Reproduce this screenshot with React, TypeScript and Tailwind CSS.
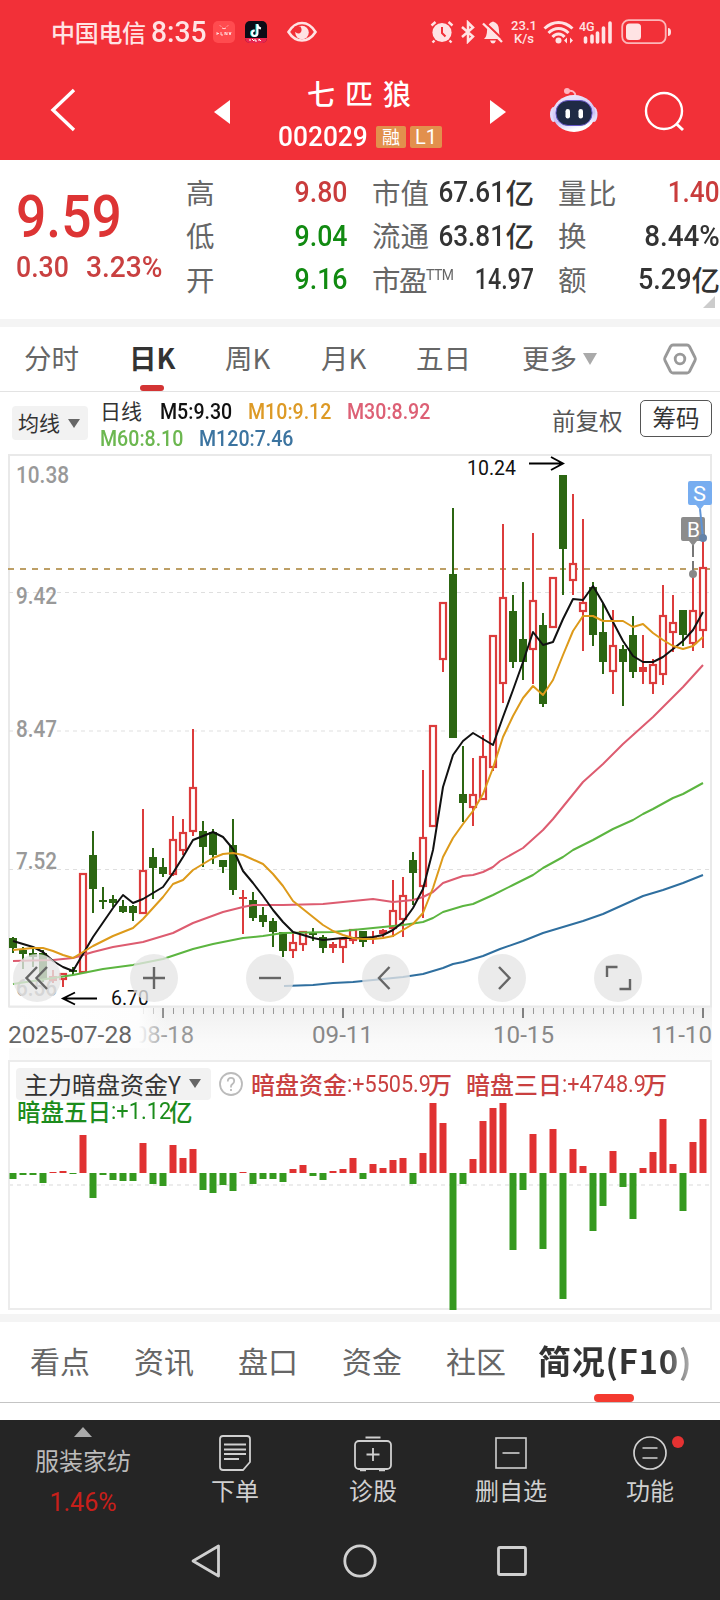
import type { ReactNode } from "react";

type Candle = {
  up: boolean;
  top: number;
  bottom: number;
  high: number;
  low: number;
};

const UP = "#dc3c3c";
const DOWN = "#2c6612";

// [direction, body top, body bottom, high, low] in chart pixels
const rawCandles: [0 | 1, number, number, number, number][] = [
  [0, 938, 948, 937, 953], [0, 950, 954, 947, 969], [0, 953, 957, 947, 967], [0, 953, 980, 950, 982],
  [1, 976, 981, 970, 983], [1, 973, 980, 973, 987], [0, 970, 972, 967, 975], [1, 873, 973, 873, 973],
  [0, 855, 889, 831, 913], [0, 900, 902, 887, 909], [0, 899, 903, 895, 907], [0, 906, 912, 900, 913],
  [0, 906, 913, 905, 921], [1, 870, 914, 809, 914], [0, 857, 868, 848, 899], [0, 867, 874, 858, 877],
  [1, 839, 875, 816, 876], [1, 832, 851, 819, 855], [1, 787, 832, 729, 836], [0, 831, 847, 821, 867],
  [0, 832, 855, 829, 864], [0, 860, 867, 860, 873], [0, 845, 890, 819, 895], [1, 897, 899, 890, 934],
  [0, 900, 918, 892, 921], [0, 915, 922, 907, 927], [0, 921, 932, 918, 947], [0, 932, 951, 932, 957],
  [1, 942, 951, 933, 958], [1, 931, 945, 931, 951], [0, 933, 935, 928, 941], [0, 937, 948, 935, 953],
  [1, 944, 948, 942, 953], [1, 938, 948, 938, 963], [1, 929, 941, 929, 944], [0, 931, 942, 931, 947],
  [1, 937, 939, 931, 944], [1, 930, 934, 929, 937], [1, 910, 929, 880, 937], [1, 895, 920, 877, 937],
  [0, 860, 873, 852, 905], [1, 837, 887, 770, 918], [1, 725, 827, 725, 827], [1, 602, 660, 602, 672],
  [0, 574, 738, 508, 738], [0, 794, 803, 746, 822], [1, 794, 808, 758, 826], [1, 756, 800, 735, 800],
  [1, 635, 768, 635, 771], [1, 597, 684, 524, 703], [0, 611, 662, 595, 668], [0, 639, 662, 582, 680],
  [1, 600, 650, 533, 684], [0, 625, 704, 613, 707], [1, 577, 628, 577, 628], [0, 475, 549, 475, 595],
  [1, 563, 581, 494, 595], [1, 602, 612, 519, 651], [0, 587, 635, 582, 646], [0, 632, 662, 603, 674],
  [1, 645, 672, 610, 694], [0, 649, 662, 645, 706], [0, 635, 672, 616, 678], [1, 667, 672, 635, 684],
  [1, 664, 684, 659, 694], [1, 615, 675, 585, 685], [1, 622, 633, 595, 652], [0, 610, 635, 610, 646],
  [1, 610, 644, 573, 651], [1, 567, 631, 537, 648],
];

const candles: Candle[] = rawCandles.map(([up, top, bottom, high, low]) => ({
  up: up === 1,
  top,
  bottom,
  high,
  low,
}));

const funds = [
  -6, -2, -2, -10, 1, 2, -1, 38, -25, -2, -7, -8, -8, 30, -11, -13, 28, 15, 24, -17, -20, -12, -18, 1,
  -11, -6, -6, -9, 4, 8, -3, -7, 2, 4, 15, -6, 9, 5, 13, 15, -11, 20, 70, 50, -137, -11, 14, 52, 65,
  70, -77, -17, 39, -76, 44, -126, 24, 7, -58, -33, 22, -14, -46, 5, 21, 54, 9, -38, 31, 54,
];

const averages = [
  {
    color: "#5cb540",
    points:
      "13,984 73,975 103,969 133,965 163,959 193,949 213,944 243,938 263,936 283,933 333,932 363,929 403,925 423,922 433,918 443,912 463,906 473,904 493,895 513,885 533,875 543,868 563,857 573,850 593,840 613,829 633,820 643,814 653,809 673,798 683,794 703,783",
  },
  {
    color: "#2f6f9f",
    points:
      "284,986 313,985 333,983 353,982 403,977 423,974 443,968 453,964 463,962 483,956 500,949 523,941 543,933 563,927 583,921 603,914 623,905 643,896 663,890 683,883 703,875",
  },
  {
    color: "#dd5c70",
    points:
      "13,961 53,960 73,958 93,952 113,947 143,942 173,933 193,923 223,912 243,907 253,905 283,905 323,904 343,902 373,899 393,902 413,900 423,897 433,892 443,883 463,876 473,875 483,872 493,867 500,861 523,848 543,830 553,819 583,782 603,764 623,744 643,726 653,717 663,707 683,687 703,665",
  },
  {
    color: "#111111",
    points:
      "13,941 33,947 43,952 53,961 63,967 73,971 93,937 113,908 123,895 133,903 143,899 163,887 173,873 183,857 193,840 203,836 213,832 223,837 233,849 243,871 253,883 263,896 273,910 283,922 293,932 303,935 313,938 323,940 333,939 343,938 363,938 373,937 383,935 393,930 403,922 413,908 423,889 433,850 443,787 453,755 463,741 473,733 483,739 493,745 503,717 513,690 523,662 533,632 543,645 553,642 563,619 573,599 583,600 593,586 603,603 613,622 623,641 633,656 643,662 653,662 663,657 673,649 683,641 693,630 703,612",
  },
  {
    color: "#dd9a1a",
    points:
      "13,950 33,948 43,948 53,951 63,955 73,958 93,946 113,936 133,928 143,919 153,908 163,897 173,884 183,880 193,870 213,858 223,854 233,853 243,855 263,864 273,874 283,886 293,901 303,909 313,917 323,925 333,931 343,935 353,938 363,939 373,939 383,938 393,936 403,930 413,924 423,913 433,888 443,857 453,838 463,824 473,811 483,794 493,768 503,737 513,716 523,698 533,686 543,695 553,680 563,655 573,631 583,616 593,616 603,621 623,621 633,627 643,624 653,633 663,640 673,646 683,649 693,646 703,637",
  },
];

const xOf = (index: number) => 13 + index * 10;

function Num({ children, className = "" }: { children: ReactNode; className?: string }) {
  return <span className={`inline-block whitespace-nowrap font-[Roboto] ${className}`}>{children}</span>;
}

function ChartText({
  x,
  y,
  width,
  size,
  fill,
  children,
  weight = 400,
}: {
  x: number;
  y: number;
  width: number;
  size: number;
  fill: string;
  children: string;
  weight?: number;
}) {
  return (
    <text x={x} y={y} fontSize={size} fill={fill} fontWeight={weight} textLength={width} lengthAdjust="spacingAndGlyphs" fontFamily="Roboto, sans-serif">
      {children}
    </text>
  );
}

function StatusBar() {
  return (
    <div className="flex h-16 items-center pl-[51px] text-[#ffe3e4]">
      <span className="mb-px w-[100px] text-[24px] leading-none font-medium tracking-[-0.3px]">中国电信</span>
      <Num className="w-[62px] origin-left scale-x-[0.94] text-[30px] leading-none font-medium">8:35</Num>
      <svg width="22" height="22" viewBox="0 0 22 22">
        <rect width="22" height="22" rx="5" fill="#ff4b4f" />
        <path d="M7 4.500l1 1M15 4.500l-1 1M9 7q2 1.500 4 0" stroke="#ffd7d7" fill="none" />
        <path d="M4 11v3M4 12.500h2M8 11v3h2M12 14v-3l2 3v-3M16 11l1 3 1-3" stroke="#ffd7d7" fill="none" />
      </svg>
      <svg width="22" height="22" viewBox="0 0 22 22" className="ml-[10px]">
        <rect width="22" height="22" rx="5" fill="#0c0b16" />
        <path d="M0 17h22v0.500a5 5 0 0 1-5 4.500H5a5 5 0 0 1-5-4.500z" fill="#e9264f" />
        <path d="M11.500 3v9.200a2.700 2.700 0 1 1-2.700-2.700" stroke="#27e6e5" strokeWidth="2" fill="none" />
        <path d="M12.500 3v9.200a2.700 2.700 0 1 1-2.700-2.700M12.500 4q.5 3 3.500 3.500" stroke="#fff" strokeWidth="2" fill="none" />
        <path d="M5 20v-2M7 18l2 2M10 18v2h2M14 20v-2l2 2" stroke="#fff" fill="none" />
      </svg>
      <svg width="30" height="22" viewBox="0 0 30 22" className="ml-5">
        <path d="M1.500 11Q7 2 15 2t13.500 9Q23 19.500 15 19.500T1.500 11z" fill="none" stroke="currentColor" strokeWidth="2.600" />
        <circle cx="15" cy="11.500" r="6.800" fill="currentColor" />
        <path d="M7.500 5.500h6q2 3.500.3 5.700t-5 .3q-2-1.500-1.300-6z" fill="#f23038" />
      </svg>
      <svg width="24" height="24" viewBox="0 0 24 24" className="ml-[113px]">
        <circle cx="12" cy="12.500" r="9.600" fill="currentColor" />
        <path d="M1.500 5.500L5.500 2M22.500 5.500L18.500 2M4.500 20.500L2.500 22.500M19.500 20.500l2 2" stroke="currentColor" strokeWidth="2.400" />
        <path d="M12 7v6l3.500 3.500" stroke="#f23038" strokeWidth="2" fill="none" />
      </svg>
      <svg width="14" height="24" viewBox="0 0 14 24" className="ml-[7px]">
        <path d="M1 7l11 9.500L7 21.500V2.500l5 5L1 17" stroke="currentColor" strokeWidth="2.500" fill="none" />
      </svg>
      <svg width="22" height="24" viewBox="0 0 22 24" className="ml-[7px]">
        <path d="M2 19q3-3 3-8Q5 3 11 1.500 17 3 17 10.500q0 6 3 8.500z" fill="currentColor" />
        <path d="M8 20.500h6q-1 3-3 3t-3-3z" fill="currentColor" />
        <path d="M2 1.500L22 20.500" stroke="#f23038" strokeWidth="2" />
        <path d="M1 3.500L20 22" stroke="currentColor" strokeWidth="2.400" />
      </svg>
      <div className="ml-[6px] w-7 text-center font-[Roboto] text-[13px] leading-[13px] font-medium">
        <div>23.1</div>
        <div>K/s</div>
      </div>
      <svg width="32" height="24" viewBox="0 0 32 24" className="ml-[5px]">
        <g fill="none" stroke="currentColor" strokeWidth="3">
          <path d="M1.500 8.500Q8 2.500 15.500 2.500T29.500 8.500" />
          <path d="M5.500 13q4.500-4.500 10-4.500T25.500 13" />
          <path d="M9.500 17q2.500-3 6-3t6 3" />
        </g>
        <circle cx="15.500" cy="20.500" r="3" fill="currentColor" />
        <path d="M21 20.500l3-3v6zM30 20.500l-3-3v6z" fill="currentColor" />
      </svg>
      <svg width="34" height="24" viewBox="0 0 34 24" className="ml-1">
        <text x="0" y="10.500" fontSize="12.500" fontWeight="500" fontFamily="Roboto, sans-serif" fill="currentColor">4G</text>
        <path d="M6.500 22v-4M13 22v-6M18.500 22v-9M24.500 22V8M31 22V3" stroke="currentColor" strokeWidth="3.600" strokeLinecap="round" />
      </svg>
      <svg width="52" height="26" viewBox="0 0 52 26" className="ml-2">
        <rect x="1.200" y="1.200" width="43.500" height="23" rx="6.500" fill="none" stroke="currentColor" strokeOpacity="0.75" strokeWidth="1.800" />
        <rect x="5" y="4.500" width="15" height="16.500" rx="3.500" fill="currentColor" />
        <path d="M47 9q3 0 3 4t-3 4z" fill="currentColor" />
      </svg>
    </div>
  );
}

function Header() {
  return (
    <div className="flex h-24 text-white">
      <svg width="30" height="46" viewBox="0 0 30 46" className="mt-[23px] ml-[50px]" fill="none" stroke="#fff" strokeWidth="3.400">
        <path d="M24 3L3 23l21 20" />
      </svg>
      <svg width="16" height="24" viewBox="0 0 16 24" className="mt-[36px] ml-[134px]">
        <path d="M16 0v24L0 12z" fill="#fff" />
      </svg>
      <div className="ml-[48px] w-[164px] shrink-0 pt-[15px]">
        <div className="ml-[29px] text-[28px] leading-7 font-medium tracking-[10px] whitespace-nowrap">七匹狼</div>
        <div className="mt-[16px] flex h-7 items-center gap-1">
          <Num className="w-[94px] origin-left scale-x-[0.94] text-[28px] leading-none font-medium">002029</Num>
          <span className="flex h-[22px] w-[30px] shrink-0 items-center justify-center rounded-[2px] bg-[#e2904d] pb-[2px] text-[18px] leading-none">融</span>
          <Num className="flex! h-[22px] w-8 shrink-0 items-center justify-center rounded-[2px] bg-[#e2904d] text-[20px] leading-none">L1</Num>
        </div>
      </div>
      <svg width="16" height="24" viewBox="0 0 16 24" className="mt-[36px] ml-[48px]">
        <path d="M0 0v24l16-12z" fill="#fff" />
      </svg>
      <svg width="50" height="46" viewBox="0 0 50 46" className="mt-[23px] ml-[43px]">
        <defs>
          <linearGradient id="shell" x1="0" y1="0" x2="0.3" y2="1">
            <stop offset="0" stopColor="#f3eefc" />
            <stop offset="0.7" stopColor="#c9bff4" />
            <stop offset="1" stopColor="#fff" />
          </linearGradient>
        </defs>
        <path d="M18 4q8-1.500 8.500 5" stroke="#ffb5c0" strokeWidth="2" fill="none" />
        <circle cx="18" cy="4" r="3" fill="#ffb5c0" />
        <ellipse cx="4.500" cy="27.500" rx="3.500" ry="7.500" fill="#e2dcfa" />
        <ellipse cx="45" cy="27.500" rx="3.500" ry="7.500" fill="#e2dcfa" />
        <ellipse cx="25" cy="26.500" rx="21.500" ry="18.500" fill="url(#shell)" />
        <rect x="7" y="13.500" width="36" height="25" rx="12" fill="#1f2a45" stroke="#6658c8" />
        <rect x="16.500" y="22" width="4.500" height="9.500" rx="2.200" fill="#fff" />
        <rect x="29.500" y="22" width="4.500" height="9.500" rx="2.200" fill="#fff" />
      </svg>
      <svg width="44" height="44" viewBox="0 0 44 44" className="mt-[26px] ml-[44px]" fill="none" stroke="#fff" strokeWidth="2.400">
        <circle cx="21" cy="21" r="18" />
        <path d="M33 33.500l7 6.500" strokeWidth="3" />
      </svg>
    </div>
  );
}

function Stat({ label, children }: { label: ReactNode; children: ReactNode }) {
  return (
    <div className="flex h-[43.500px] items-center justify-between text-[28.500px] leading-none text-[#333]">
      <span className="-ml-px pb-[2px] whitespace-nowrap text-[#666]">{label}</span>
      <span className="flex items-center">{children}</span>
    </div>
  );
}

function Quote() {
  return (
    <section className="relative flex h-[159px] pt-[11px]">
      <div className="w-[187px] shrink-0 pl-4 text-[#dd3434]">
        <Num className="mt-[16px] block! origin-left scale-x-[0.89] text-[60px] leading-[60px] font-medium">9.59</Num>
        <div className="mt-[4px] flex h-8 items-center text-[#c94040]">
          <Num className="w-[70px] origin-left scale-x-[0.92] text-[29px] leading-none font-medium">0.30</Num>
          <Num className="origin-left scale-x-[0.97] text-[29px] leading-none font-medium">3.23%</Num>
        </div>
      </div>
      <div className="w-[161px]">
        <Stat label="高"><Num className="origin-right scale-x-[0.92] text-[29px] font-medium text-[#c93c3c]">9.80</Num></Stat>
        <Stat label="低"><Num className="origin-right scale-x-[0.92] text-[29px] font-medium text-[#118a11]">9.04</Num></Stat>
        <Stat label="开"><Num className="origin-right scale-x-[0.92] text-[29px] font-medium text-[#118a11]">9.16</Num></Stat>
      </div>
      <div className="ml-[25px] w-[161px]">
        <Stat label="市值"><Num className="origin-right scale-x-[0.9] text-[29px] font-medium">67.61</Num><span className="pb-[2px] font-medium">亿</span></Stat>
        <Stat label="流通"><Num className="origin-right scale-x-[0.9] text-[29px] font-medium">63.81</Num><span className="pb-[2px] font-medium">亿</span></Stat>
        <Stat label={<span className="flex items-start tracking-[-1.500px]">市盈<span className="mt-[3px] origin-left scale-x-[0.9] font-[Roboto] text-[15.500px] leading-none tracking-[-0.5px]">TTM</span></span>}>
          <Num className="origin-right scale-x-[0.8] text-[29px] font-medium">14.97</Num>
        </Stat>
      </div>
      <div className="ml-[25px] w-[161px]">
        <Stat label={<span className="tracking-[1.500px]">量比</span>}><Num className="origin-right scale-x-[0.9] text-[29px] font-medium text-[#c93c3c]">1.40</Num></Stat>
        <Stat label="换"><Num className="origin-right scale-x-[0.96] text-[29px] font-medium">8.44%</Num></Stat>
        <Stat label="额"><Num className="origin-right scale-x-[0.93] text-[29px] font-medium">5.29</Num><span className="pb-[2px] font-medium">亿</span></Stat>
      </div>
      <svg width="12" height="12" viewBox="0 0 12 12" className="absolute right-[5px] bottom-[11px]">
        <path d="M12 0v12H0z" fill="#ccc" />
      </svg>
    </section>
  );
}

function PeriodTabs() {
  return (
    <nav className="flex h-[65px] items-center border-b border-[#e3e3e3] pb-[2px] pl-[24px] text-[27.500px] leading-none text-[#666]">
      <span className="w-[105px]">分时</span>
      <span className="relative w-[96px] font-bold text-[#333]">
        日K
        <i className="absolute top-[41px] left-[11px] h-[6px] w-6 rounded-full bg-[#d33434]" />
      </span>
      <span className="w-[96px]">周K</span>
      <span className="w-[95px]">月K</span>
      <span className="w-[106px]">五日</span>
      <span className="w-[61px] whitespace-nowrap">更多</span>
      <svg width="14" height="12" viewBox="0 0 14 12" className="mt-[2px]"><path d="M0 0h14L7 12z" fill="#aaa" /></svg>
      <svg width="34" height="32" viewBox="0 0 34 32" className="mt-[2px] ml-[66px]" fill="none" stroke="#999" strokeWidth="2.800" strokeLinejoin="round">
        <path d="M10 2h14q1.500 0 2.500 1.500l5.500 11q.7 1.500 0 3l-5.500 11Q25.500 30 24 30H10q-1.500 0-2.500-1.500L2 17.500q-.7-1.500 0-3l5.500-11Q8.500 2 10 2z" />
        <circle cx="17" cy="16" r="4.800" />
      </svg>
    </nav>
  );
}

function AverageLegend() {
  return (
    <div className="flex h-[62px] items-start pl-3">
      <div className="mt-[14px] flex h-[34px] w-[76px] items-center rounded-[4px] bg-[#f2f2f2] pl-[6px] text-[21px] leading-none text-[#333]">
        <span className="pb-px">均线</span>
        <svg width="12" height="9" viewBox="0 0 12 9" className="ml-[8px]"><path d="M0 0h12L6 9z" fill="#666" /></svg>
      </div>
      <div className="ml-[12px] w-[441px] pt-[6px] text-[21px] leading-none">
        <div className="flex h-[27px] items-center">
          <span className="w-[60px] pb-[3px] text-[#333]">日线</span>
          <Num className="w-[88px] origin-left scale-x-[0.89] text-[22px] font-medium text-[#111]">M5:9.30</Num>
          <Num className="w-[99px] origin-left scale-x-[0.89] text-[22px] font-medium text-[#dd9a26]">M10:9.12</Num>
          <Num className="origin-left scale-x-[0.89] text-[22px] font-medium text-[#dd6075]">M30:8.92</Num>
        </div>
        <div className="flex h-[27px] items-center">
          <Num className="w-[99px] origin-left scale-x-[0.89] text-[22px] font-medium text-[#6cb750]">M60:8.10</Num>
          <Num className="origin-left scale-x-[0.89] text-[22px] font-medium text-[#3c74a0]">M120:7.46</Num>
        </div>
      </div>
      <span className="mt-[16px] ml-[11px] w-[88px] text-[23.500px] leading-[24px] whitespace-nowrap text-[#555]">前复权</span>
      <span className="mt-[8px] flex h-[37px] w-[72px] items-center justify-center rounded-[5px] border border-[#555] pb-px text-[23.500px] leading-none text-[#333]">筹码</span>
    </div>
  );
}

function CandleShape({ candle, x }: { candle: Candle; x: number }) {
  const color = candle.up ? UP : DOWN;
  const height = candle.bottom - candle.top;
  if (!candle.up || height < 6) {
    return (
      <g fill={color}>
        <rect x={x - 1} y={candle.high} width={2} height={candle.low - candle.high} />
        <rect x={x - 4} y={candle.top} width={8} height={height} />
      </g>
    );
  }
  return (
    <g>
      <rect x={x - 1} y={candle.high} width={2} height={candle.top - candle.high} fill={color} />
      <rect x={x - 1} y={candle.bottom} width={2} height={candle.low - candle.bottom} fill={color} />
      <rect x={x - 3} y={candle.top + 1} width={6} height={height - 2} fill="#fff" stroke={color} strokeWidth={2.2} />
    </g>
  );
}

function ChartButton({ x, children }: { x: number; children: ReactNode }) {
  return (
    <g transform={`translate(${x} 978)`}>
      <circle r={24} fill="#e6e6e6" fillOpacity={0.78} />
      <g fill="none" stroke="#666" strokeWidth={2.4}>{children}</g>
    </g>
  );
}

function KLineChart() {
  return (
    <svg width="720" height="606" viewBox="0 454 720 606" className="block">
      <defs>
        <linearGradient id="axis" x1="0" y1="0" x2="0" y2="1">
          <stop offset="0" stopColor="#f0f0f0" />
          <stop offset="0.7" stopColor="#fafafa" />
          <stop offset="1" stopColor="#fbfbfb" />
        </linearGradient>
        <linearGradient id="axisFade">
          <stop offset="0" stopColor="#fff" />
          <stop offset="0.82" stopColor="#fdfdfd" />
          <stop offset="1" stopColor="#fafafa" stopOpacity="0" />
        </linearGradient>
      </defs>
      <rect x={9} y={1007} width={703} height={53} fill="url(#axis)" />
      <rect x={9} y={455} width={702} height={551.5} fill="#fff" stroke="#e9e9e9" strokeWidth={2} />
      {[592.5, 731, 869.5].map((y) => (
        <line key={y} x1={9} x2={711} y1={y} y2={y} stroke="#dfdfdf" strokeWidth={1.2} strokeDasharray="4 4" />
      ))}
      <ChartText x={16} y={483} width={53} size={24} fill="#999" weight={500}>10.38</ChartText>
      <ChartText x={16} y={604} width={41} size={24} fill="#999" weight={500}>9.42</ChartText>
      <ChartText x={16} y={737} width={41} size={24} fill="#999" weight={500}>8.47</ChartText>
      <ChartText x={16} y={869} width={41} size={24} fill="#999" weight={500}>7.52</ChartText>
      <ChartText x={16} y={996} width={41} size={24} fill="#999" weight={500}>6.56</ChartText>
      <line x1={8} x2={711} y1={569} y2={569} stroke="#bd9f66" strokeWidth={1.8} strokeDasharray="6 6" />

      {candles.map((candle, index) => (
        <CandleShape key={index} candle={candle} x={xOf(index)} />
      ))}
      {averages.map((line) => (
        <polyline key={line.color} points={line.points} fill="none" stroke={line.color} strokeWidth={2} strokeLinejoin="round" />
      ))}

      <g fill="none" stroke="#000" strokeWidth={1.9}>
        <path d="M529 463.500h34M551 457l12 6.500-12 6.500" />
        <path d="M97 998.500H64M75 992.500l-12 6 12 6" />
      </g>
      <ChartText x={467} y={475} width={49} size={20.5} fill="#111">10.24</ChartText>
      <ChartText x={111} y={1005} width={38} size={20.5} fill="#111">6.70</ChartText>

      <path d="M693 545v28" stroke="#777" strokeWidth={2} strokeDasharray="12 4" />
      <circle cx={693} cy={574} r={4} fill="#888" />
      <path d="M681 519q0-2 2-2h20q2 0 2 2v20q0 2-2 2h-6l-4 5-4-5h-6q-2 0-2-2z" fill="#8c8c8c" />
      <ChartText x={687} y={537} width={13} size={21} fill="#fff">B</ChartText>
      <path d="M700 509l3 29" stroke="#5f94d6" strokeWidth={2} />
      <circle cx={703} cy={538} r={4} fill="#6583a8" />
      <path d="M688 483q0-2 2-2h20q2 0 2 2v20q0 2-2 2h-6l-4 5-4-5h-6q-2 0-2-2z" fill="#77adf0" />
      <ChartText x={693} y={501} width={13} size={21} fill="#fff">S</ChartText>

      <ChartButton x={37}><path d="M0 -11L-10.500 0 0 11M10 -11L-0.500 0 10 11" /></ChartButton>
      <ChartButton x={154}><path d="M-11 0h22M0 -11v22" /></ChartButton>
      <ChartButton x={270}><path d="M-11 0h22" /></ChartButton>
      <ChartButton x={386}><path d="M3.500 -11L-7 0 3.500 11" /></ChartButton>
      <ChartButton x={502}><path d="M-3 -11L7.500 0 -3 11" /></ChartButton>
      <ChartButton x={618}><path d="M-11 -1v-10h10.500M1.500 11H12V1" /></ChartButton>

      {Array.from({ length: 57 }, (_, index) => {
        const x = 143 + index * 10;
        const major = (x - 163) % 180 === 0;
        return (
          <line
            key={x}
            x1={major ? x : x + 0.5}
            x2={major ? x : x + 0.5}
            y1={1008}
            y2={major ? 1018 : 1014}
            stroke={major ? "#808080" : "#999"}
            strokeWidth={major ? 2 : 1}
          />
        );
      })}
      <ChartText x={134} y={1043} width={60} size={24} fill="#999">08-18</ChartText>
      <rect x={9} y={1008} width={158} height={40} fill="url(#axisFade)" />
      <ChartText x={8} y={1043} width={124} size={24} fill="#666">2025-07-28</ChartText>
      <ChartText x={312} y={1043} width={61} size={24} fill="#888">09-11</ChartText>
      <ChartText x={493} y={1043} width={61} size={24} fill="#888">10-15</ChartText>
      <ChartText x={651} y={1043} width={61} size={24} fill="#888">11-10</ChartText>
    </svg>
  );
}

function FundPanel() {
  return (
    <section className="h-[254px] pl-2">
      <div className="h-[250px] w-[704px] border-2 border-[#ececec]">
        <div className="flex h-[38px] items-end text-[24px] leading-none">
          <div className="ml-[6px] flex h-8 w-[195px] items-center rounded-[4px] bg-[#f2f2f2] pb-px pl-[8px] whitespace-nowrap text-[#333]">
            主力暗盘资金Y
            <svg width="12" height="9" viewBox="0 0 12 9" className="ml-[8px]"><path d="M0 0h12L6 9z" fill="#666" /></svg>
          </div>
          <svg width="24" height="24" viewBox="0 0 24 24" className="mb-1 ml-2" fill="none" stroke="#bbb" strokeWidth="1.800">
            <circle cx="12" cy="12" r="11" />
            <path d="M8.800 9.500q0-3.700 3.200-3.700t3.200 3.200q0 1.700-1.700 2.900T12 14.500v1M12 17v2" />
          </svg>
          <span className="mb-[4px] ml-[8px] flex items-center font-medium whitespace-nowrap text-[#c94040]">
            暗盘资金<Num className="w-[81px] origin-left scale-x-[0.9] font-normal">:+5505.9</Num>万
          </span>
          <span className="mb-[4px] ml-[14px] flex items-center font-medium whitespace-nowrap text-[#c94040]">
            暗盘三日<Num className="w-[81px] origin-left scale-x-[0.9] font-normal">:+4748.9</Num>万
          </span>
        </div>
        <div className="flex h-6 items-center pb-px pl-[7px] text-[23.500px] leading-none font-medium text-[#1c8c1c]">
          暗盘五日<Num className="w-[58px] origin-left scale-x-[0.93] font-normal">:+1.12</Num>亿
        </div>
        <svg width="704" height="187" viewBox="10 1124 704 187" className="block overflow-visible">
          <line x1={9} x2={709} y1={1185} y2={1185} stroke="#ececec" strokeWidth={2} strokeDasharray="4 4" />
          {funds.map((value, index) => (
            <rect
              key={index}
              x={xOf(index) - 3.5}
              y={value > 0 ? 1173 - value : 1173}
              width={7}
              height={Math.abs(value)}
              fill={value > 0 ? "#e03232" : "#35991f"}
            />
          ))}
        </svg>
      </div>
    </section>
  );
}

function InfoTabs() {
  return (
    <nav className="relative flex h-[81px] items-center border-b border-[#c4c4c4] pb-[4px] pl-[30px] text-[30px] leading-none whitespace-nowrap text-[#666]">
      {["看点", "资讯", "盘口", "资金", "社区"].map((label) => (
        <span key={label} className="w-[104px]">{label}</span>
      ))}
      <span className="-ml-[12px] bg-linear-to-r from-[#333] from-80% to-[#bbb] bg-clip-text py-1 text-[33px] font-bold tracking-[0.7px] text-transparent">
        简况(F10)
      </span>
      <i className="absolute bottom-0 left-[594px] h-2 w-10 rounded-full bg-[#f43a30]" />
    </nav>
  );
}

function BottomBar() {
  return (
    <footer className="h-[180px] bg-[#252525] text-[24px] leading-none text-[#d0d0d0]">
      <div className="flex h-[102px]">
        <div className="flex w-[166px] flex-col items-center text-[#bbb]">
          <svg width="18" height="10" viewBox="0 0 18 10" className="mt-[7px]"><path d="M9 0l9 10H0z" fill="#aaa" /></svg>
          <span className="mt-[11px]">服装家纺</span>
          <Num className="mt-[18px] text-[25px] text-[#c81f1a]">1.46%</Num>
        </div>
        <div className="flex w-[138px] flex-col items-center pt-[14px]">
          <svg width="34" height="38" viewBox="0 0 34 38" fill="none" stroke="currentColor" strokeWidth="1.800">
            <path d="M5 2h24q3 0 3 3v23l-7 8H5q-3 0-3-3V5q0-3 3-3z" />
            <path d="M6 10.500h22M6 15.500h22M6 20h22M6 25h15" />
          </svg>
          <span className="mt-[6px]">下单</span>
        </div>
        <div className="flex w-[138px] flex-col items-center pt-[14px]">
          <svg width="40" height="38" viewBox="0 0 40 38" fill="none" stroke="currentColor" strokeWidth="1.800">
            <rect x="2" y="7" width="36" height="28" rx="4" />
            <path d="M12.500 3.500h15M20 14v13M13.500 20.500h13" />
            <path d="M7 36h6M26 36h6" strokeWidth="2.500" />
          </svg>
          <span className="mt-[6px]">诊股</span>
        </div>
        <div className="flex w-[138px] flex-col items-center pt-[14px]">
          <svg width="34" height="38" viewBox="0 0 34 38" fill="none" stroke="currentColor" strokeWidth="1.600">
            <rect x="2" y="4" width="30" height="30" />
            <path d="M8.500 19h17" />
          </svg>
          <span className="mt-[6px]">删自选</span>
        </div>
        <div className="relative flex w-[140px] flex-col items-center pt-[14px]">
          <svg width="38" height="38" viewBox="0 0 38 38" fill="none" stroke="currentColor" strokeWidth="1.700">
            <circle cx="19" cy="19" r="16" />
            <path d="M11.500 14h15M11.500 24h15" />
          </svg>
          <i className="absolute top-4 right-[36px] h-3 w-3 rounded-full bg-[#e53232]" />
          <span className="mt-[6px]">功能</span>
        </div>
      </div>
      <div className="flex h-[78px] items-start pt-[21px] pl-[190px]">
        <svg width="32" height="36" viewBox="0 0 32 36" fill="none" stroke="currentColor" strokeWidth="2.800" strokeLinejoin="round">
          <path d="M28.500 3v30L3 18z" />
        </svg>
        <svg width="36" height="36" viewBox="0 0 36 36" className="ml-[120px]" fill="none" stroke="currentColor" strokeWidth="2.800">
          <circle cx="18" cy="18" r="15.200" />
        </svg>
        <svg width="32" height="36" viewBox="0 0 32 36" className="ml-[118px]" fill="none" stroke="currentColor" strokeWidth="2.800">
          <rect x="2.500" y="4.500" width="27" height="27" rx="1.500" />
        </svg>
      </div>
    </footer>
  );
}

export default function App() {
  return (
    <div className="h-[1600px] w-[720px] overflow-hidden bg-white font-['Noto_Sans_CJK_SC',sans-serif]">
      <header className="h-40 bg-[#f23038]">
        <StatusBar />
        <Header />
      </header>
      <Quote />
      <div className="h-2 bg-[#f4f4f4]" />
      <PeriodTabs />
      <AverageLegend />
      <KLineChart />
      <FundPanel />
      <div className="h-2 bg-[#f4f4f4]" />
      <InfoTabs />
      <div className="h-[17px]" />
      <BottomBar />
    </div>
  );
}
